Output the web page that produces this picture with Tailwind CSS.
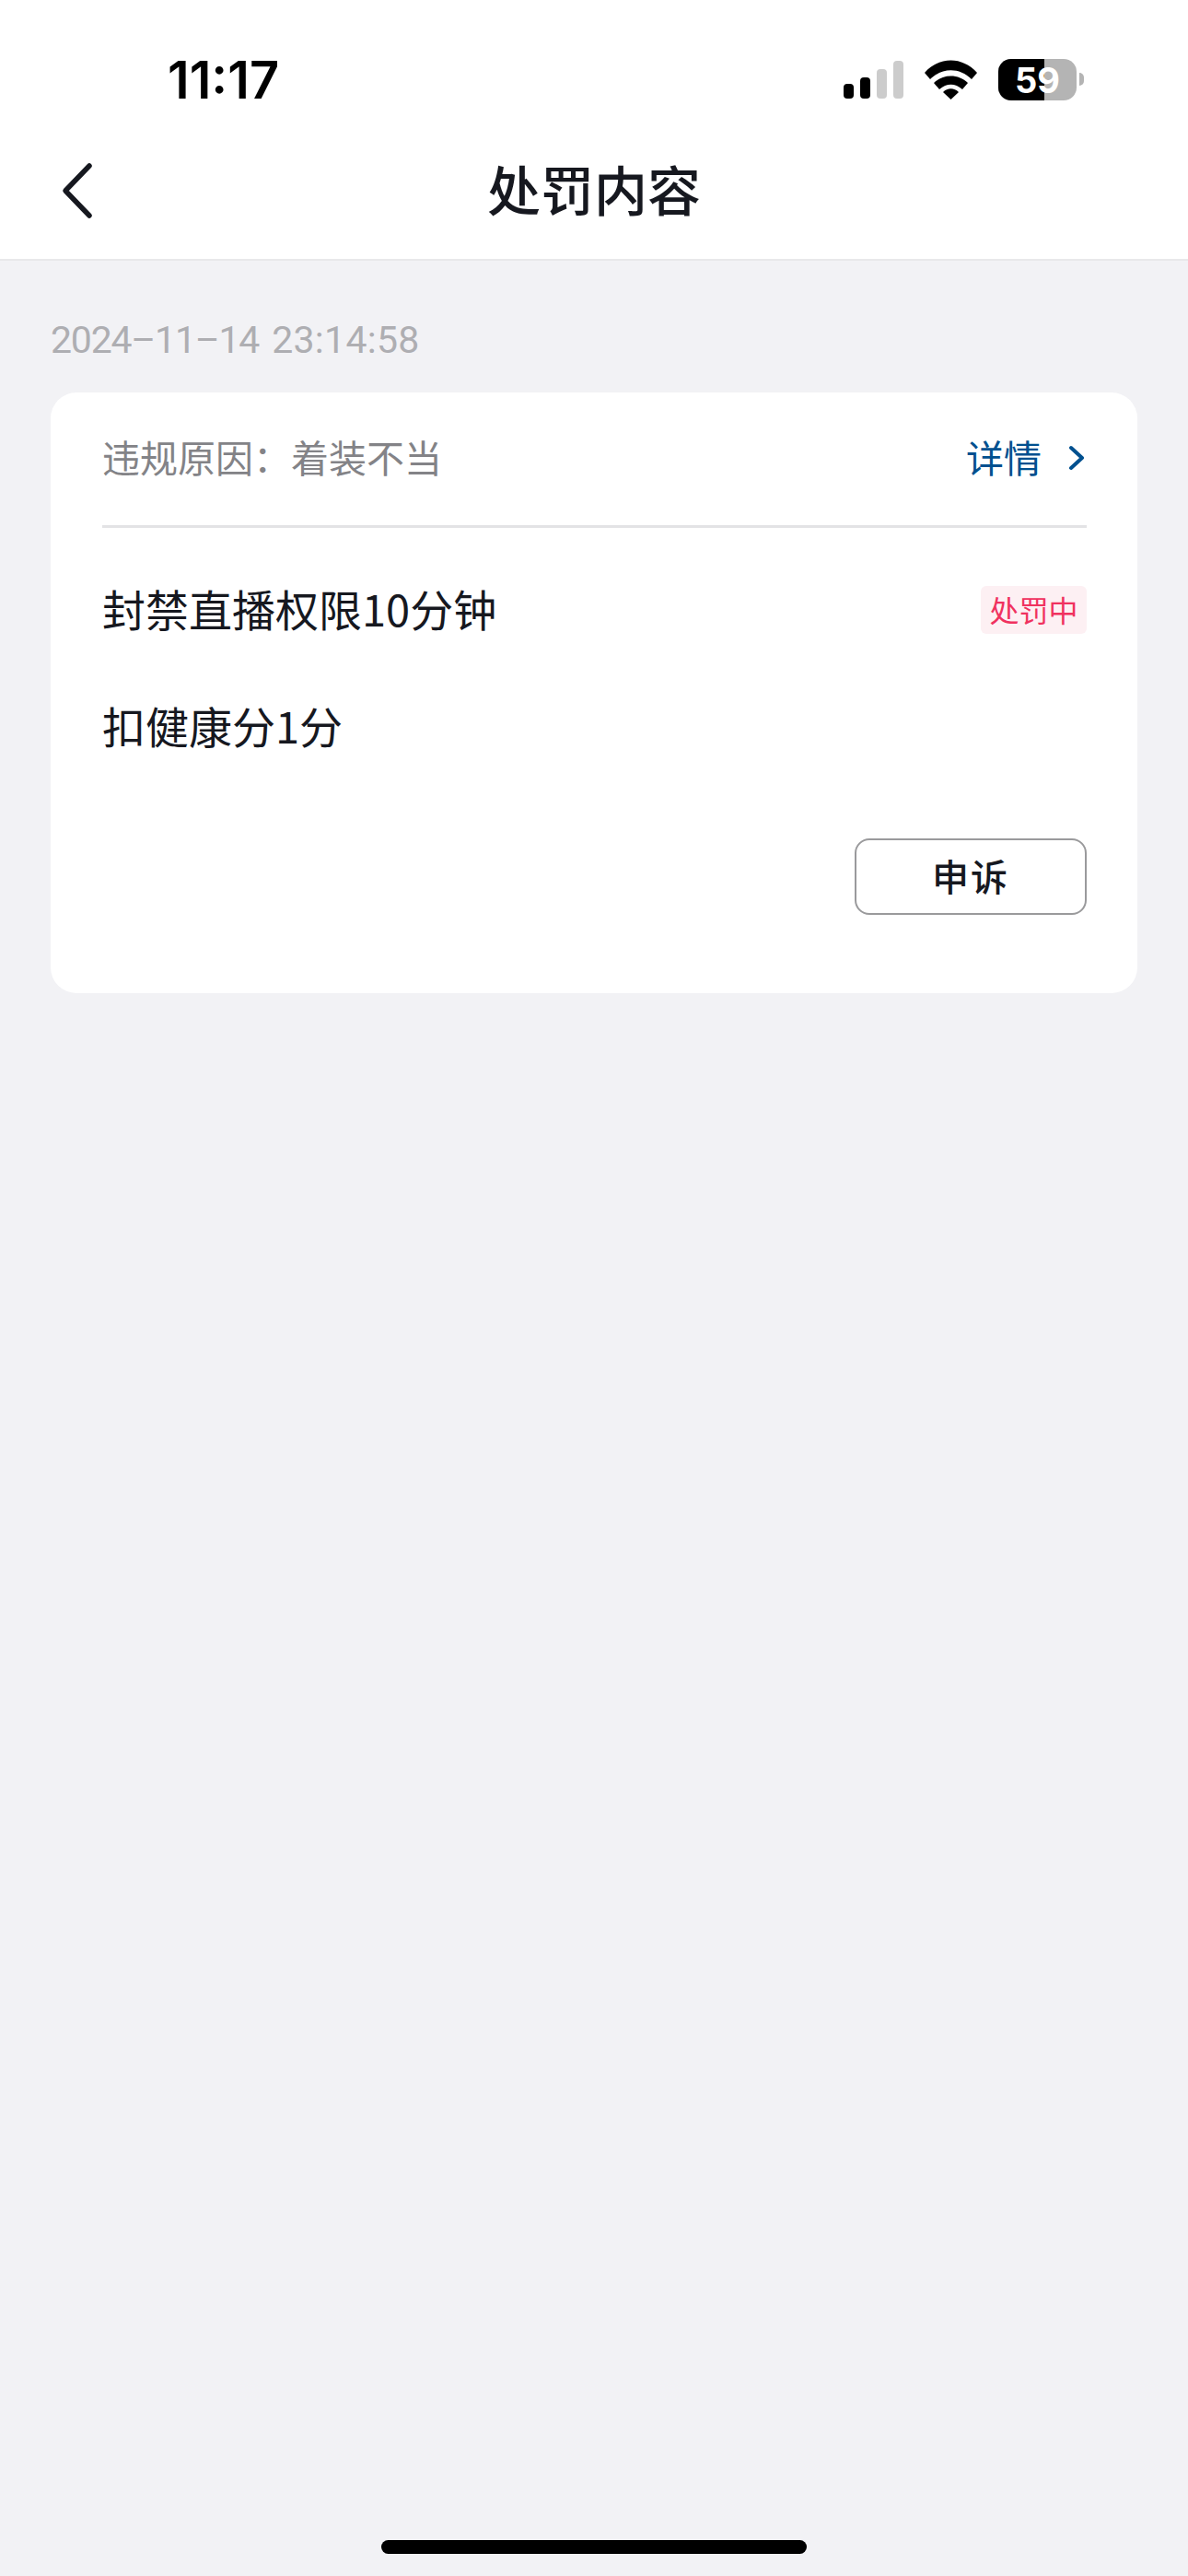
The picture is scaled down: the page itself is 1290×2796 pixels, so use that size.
<!DOCTYPE html>
<html lang="zh"><head><meta charset="utf-8"><script src="https://cdn.jsdelivr.net/npm/@tailwindcss/browser@4"></script></head>
<body class="m-0">
<div class="flex flex-col w-[1290px] h-[2796px] bg-[#f2f2f5] font-['Noto_Sans_CJK_SC','Noto_Sans',sans-serif] overflow-hidden">
  <header class="bg-white h-[283px] border-b-2 border-[#e8e8ea] shrink-0">
    <div class="flex items-start h-[140px] pl-[182px] pr-[113px]">
      <span class="mt-[52px] text-[56px] leading-[70px] font-semibold text-black font-['Inter',sans-serif]">11:17</span>
      <div class="ml-auto mt-[64px] flex items-start">
        <svg width="65" height="43" viewBox="0 0 65 43" class="mt-[2px]"><rect x="0" y="25" width="11" height="16" rx="4" fill="#000"/><rect x="18" y="18" width="11" height="23" rx="4" fill="#000"/><rect x="36" y="9" width="11" height="32" rx="4" fill="#ccc"/><rect x="54" y="0" width="11" height="41" rx="4" fill="#ccc"/></svg>
        <svg width="57" height="43" viewBox="0 0 57 43" class="ml-[23px] mt-[1px]"><path d="M0 14 C16 -4 41 -4 57 14 L51 21 C38 8 19 8 6 21 Z M10 25 C20 15 37 15 47 25 L41 32 C33 25 24 25 16 32 Z M20 35 C25 30 32 30 37 35 L28.5 43 Z" fill="#000" fill-rule="evenodd"/></svg>
        <div class="relative ml-[23px] w-[85px] h-[45px] rounded-[14px] overflow-hidden bg-[#b4b4b4] flex items-center justify-center">
          <div class="absolute left-0 top-0 bottom-0 w-[50px] bg-black"></div>
          <span class="relative text-white text-[38px] leading-none font-bold font-['Inter',sans-serif]">59</span>
        </div>
        <div class="ml-[3px] mt-[15px] w-[5px] h-[14px] rounded-r-full bg-[#b4b4b4]"></div>
      </div>
    </div>
    <div class="relative flex items-center justify-center h-[134px]">
      <svg width="36" height="62" viewBox="0 0 36 62" class="absolute left-[66px] top-[36px]"><path d="M31 4 L5 31 L31 58" fill="none" stroke="#16181f" stroke-width="5.5" stroke-linecap="round" stroke-linejoin="round"/></svg>
      <h1 class="text-[58px] leading-[80px] font-medium text-[#16181f] -mt-[6px]">处罚内容</h1>
    </div>
  </header>
  <main class="px-[55px]">
    <p class="flex gap-[14px] mt-[58px] mb-[29px] text-[41px] leading-[56px] text-[#aeaeb2] font-['Roboto',sans-serif]"><span class="tracking-[-1.2px]">2024–11–14</span><span class="tracking-[0.3px]">23:14:58</span></p>
    <section class="bg-white rounded-[28px] h-[652px] pl-[56px] pr-[55px]">
      <div class="flex items-center h-[147px] pb-[6px] border-b-[3px] border-[#e3e3e5]">
        <span class="text-[41px] leading-[56px] text-[#838387]">违规原因：着装不当</span>
        <span class="ml-auto text-[41px] leading-[56px] text-[#00508f]">详情</span>
        <svg width="20" height="30" viewBox="0 0 20 30" class="ml-[28px] mr-[1px] mt-[4px]"><path d="M4 4 L16 15 L4 26" fill="none" stroke="#00508f" stroke-width="4" stroke-linecap="round" stroke-linejoin="round"/></svg>
      </div>
      <div class="flex items-center justify-between mt-[57px] h-[60px]">
        <span class="text-[47px] leading-[60px] text-[#16181f]">封禁直播权限10分钟</span>
        <span class="mt-[3px] w-[115px] h-[52px] rounded-[6px] bg-[#fdf0f3] text-[#f0325f] text-[32px] leading-[50px] text-center">处罚中</span>
      </div>
      <p class="mt-[67px] text-[47px] leading-[60px] text-[#16181f]">扣健康分1分</p>
      <div class="flex justify-end mt-[93px]">
        <button class="w-[252px] h-[83px] rounded-[16px] border-2 border-[#9a9a9c] bg-white pb-[4px] text-[40px] tracking-[2px] font-medium text-[#16181f]">申诉</button>
      </div>
    </section>
  </main>
  <div class="mt-auto mb-[24px] mx-auto w-[462px] h-[15px] rounded-full bg-black"></div>
</div>
</body></html>
